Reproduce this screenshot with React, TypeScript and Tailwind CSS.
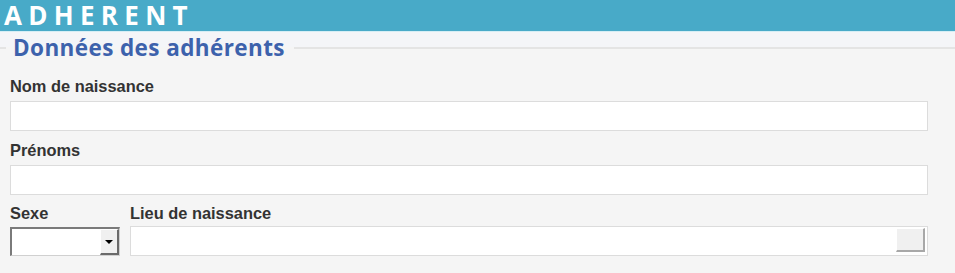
import React from "react";

const labelCls =
  "block text-[16.4px] leading-[18px] font-bold text-[#333333] font-['Liberation_Sans',Arial,sans-serif]";
const inputCls = "block w-full h-[30px] bg-white border border-[#dcdcdc]";

export default function App() {
  return (
    <div className="w-[955px] h-[273px] bg-[#f5f5f5] overflow-hidden">
      {/* header bar */}
      <div className="h-[32px] bg-[#48aac8] border-b border-[#d6eef5] pl-[4px]">
        <h1 className="text-white text-[26px] leading-[31px] font-bold tracking-[6.3px] font-['Open_Sans',sans-serif]">
          ADHERENT
        </h1>
      </div>

      {/* legend */}
      <div className="bg-[#f4f5f8] h-[15px]" />
      <div className="flex items-center h-[1px] overflow-visible">
        <div className="w-[6px] h-[2px] bg-[#e4e4e4]" />
        <span className="ml-[7px] mr-[9px] text-[22.5px] leading-[26px] font-bold tracking-[0.4px] text-[#3d62ac] font-['Open_Sans',sans-serif] whitespace-nowrap">
          Données des adhérents
        </span>
        <div className="flex-1 h-[2px] bg-[#e4e4e4]" />
      </div>

      {/* form */}
      <div className="pl-[10px] pr-[27px] pt-[29px]">
        <label className={labelCls}>Nom de naissance</label>
        <div className={`${inputCls} mt-[6px]`} />

        <label className={`${labelCls} mt-[10px]`}>Prénoms</label>
        <div className={`${inputCls} mt-[6px]`} />

        <div className="flex gap-[10px] mt-[9px]">
          <div className="w-[110px]">
            <label className={labelCls}>Sexe</label>
            {/* select box */}
            <div className="mt-[5px] h-[29px] flex bg-white border-t-2 border-l-2 border-t-[#7a7a7a] border-l-[#7a7a7a] border-b border-r border-b-[#d0d0d0] border-r-[#d0d0d0]">
              <div className="flex-1" />
              <div className="w-[19px] h-full bg-[#f0f0f0] border-t border-l border-t-white border-l-white border-r-2 border-b-2 border-r-[#6a6a6a] border-b-[#6a6a6a] flex items-center justify-center">
                <svg width="8" height="4" viewBox="0 0 8 4">
                  <path d="M0 0 L8 0 L4 4 Z" fill="#000" />
                </svg>
              </div>
            </div>
          </div>
          <div className="flex-1">
            <label className={labelCls}>Lieu de naissance</label>
            <div className="mt-[4px] h-[30px] bg-white border border-[#dcdcdc] flex justify-end items-start pt-[1px] pr-[2px]">
              <div className="w-[29px] h-[24px] bg-[#f0f0f0] border-t border-l border-t-white border-l-white border-r-2 border-b-2 border-r-[#a8a8a8] border-b-[#a8a8a8]" />
            </div>
          </div>
        </div>
      </div>
    </div>
  );
}
